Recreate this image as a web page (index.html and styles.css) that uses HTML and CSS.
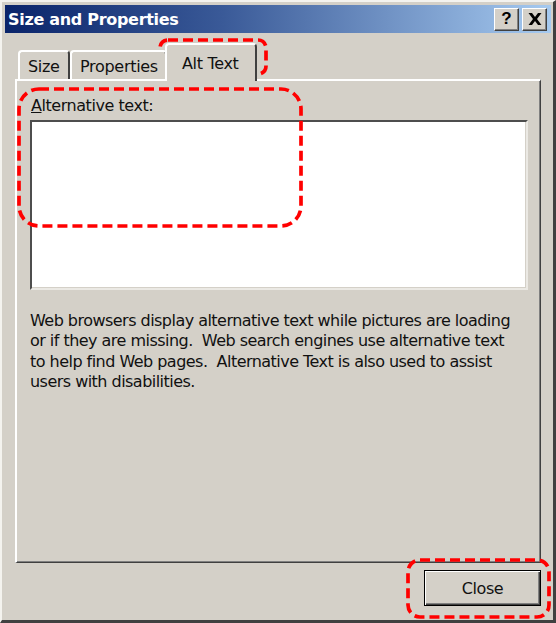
FILE: index.html
```html
<!DOCTYPE html>
<html>
<head>
<meta charset="utf-8">
<link rel="stylesheet" href="styles.css">
</head>
<body>
<div class="window">
  <div class="titlebar">
    <span class="title">Size and Properties</span>
    <div class="tbtns">
      <span class="tbtn help">?</span>
      <span class="tbtn close">
        <svg width="14" height="12" viewBox="0 0 14 12"><path d="M0.5 0h3.5l3 4 3-4h3.5L9 6l4.5 6H10L7 8l-3 4H0.5L5 6z" fill="#000"/></svg>
      </span>
    </div>
  </div>
  <div class="content">
    <div class="tabs">
      <div class="tab first">Size</div>
      <div class="tab">Properties</div>
      <div class="tab active">Alt Text</div>
    </div>
    <div class="panel">
      <div class="label"><u>A</u>lternative text:</div>
      <div class="textarea"></div>
      <p class="desc">Web browsers display alternative text while pictures are loading<br>or if they are missing.&nbsp; Web search engines use alternative text<br>to help find Web pages.&nbsp; Alternative Text is also used to assist<br>users with disabilities.</p>
    </div>
    <div class="footer">
      <button class="btn">Close</button>
    </div>
  </div>
  <svg class="marks" width="556" height="623" viewBox="0 0 556 623">
    <rect x="160" y="40" width="106" height="34" rx="8" />
    <rect x="19" y="89" width="282" height="137" rx="20" />
    <rect x="408" y="560" width="141" height="57" rx="12" />
  </svg>
</div>
</body>
</html>
```

FILE: styles.css
```css
html, body {
  margin: 0;
  padding: 0;
  background: #d4d0c8;
}
.window {
  position: relative;
  width: 556px;
  height: 623px;
  box-sizing: border-box;
  background: #d4d0c8;
  border-top: 2px solid #f4f3ef;
  border-left: 2px solid #f4f3ef;
  border-right: 3px solid #404040;
  border-bottom: 3px solid #404040;
  padding: 3px 2px 0 3px;
  font-family: "DejaVu Sans", sans-serif;
  color: #111;
  display: flex;
  flex-direction: column;
}
.titlebar {
  height: 28px;
  flex: none;
  background: linear-gradient(to right, #0a246a, #3a5a98 40%, #a6caf0);
  display: flex;
  align-items: center;
  justify-content: space-between;
  padding: 0 4px 0 3px;
}
.title {
  color: #fff;
  font-weight: bold;
  font-size: 16px;
  letter-spacing: -0.3px;
}
.tbtns {
  display: flex;
  gap: 3px;
}
.tbtn {
  width: 25px;
  height: 23px;
  box-sizing: border-box;
  background: #d4d0c8;
  border-top: 1px solid #fff;
  border-left: 1px solid #fff;
  border-right: 1px solid #404040;
  border-bottom: 1px solid #404040;
  box-shadow: inset -1px -1px 0 #808080;
  display: flex;
  align-items: center;
  justify-content: center;
  font-family: "Liberation Sans", sans-serif;
  font-weight: bold;
  font-size: 17px;
  color: #000;
}
.content {
  flex: 1;
  display: flex;
  flex-direction: column;
  padding: 10px 10px 0 10px;
}
.tabs {
  height: 38px;
  flex: none;
  display: flex;
  align-items: flex-end;
  padding-left: 3px;
  position: relative;
  z-index: 1;
  margin-bottom: -2px;
}
.tab {
  height: 29px;
  box-sizing: border-box;
  padding: 2px 7px 0 8px;
  border-top: 2px solid #fff;
  border-left: 2px solid #fff;
  border-right: 2px solid #404040;
  border-radius: 4px 4px 0 0;
  font-size: 16px;
  letter-spacing: -0.3px;
  display: flex;
  align-items: center;
  background: #d4d0c8;
  margin-bottom: 2px;
}
.tab.first {
  width: 52px;
}
.tab.active {
  height: 38px;
  margin-bottom: 0;
  margin-left: -2px;
  padding: 0 16px 0 15px;
  position: relative;
}
.panel {
  height: 484px;
  flex: none;
  box-sizing: border-box;
  border-top: 2px solid #fff;
  border-left: 2px solid #fff;
  border-right: 1px solid #404040;
  border-bottom: 1px solid #404040;
  box-shadow: inset -1px -1px 0 #808080;
  padding: 15px 12px 0 13px;
  display: flex;
  flex-direction: column;
}
.label {
  font-size: 16px;
  letter-spacing: -0.45px;
  padding-left: 1px;
  height: 24px;
  line-height: 20px;
}
.textarea {
  height: 170px;
  flex: none;
  box-sizing: border-box;
  background: #fff;
  border-top: 2px solid #4d4d4d;
  border-left: 2px solid #4d4d4d;
  border-right: 2px solid #ebe9e4;
  border-bottom: 2px solid #ebe9e4;
  box-shadow: inset -1px -1px 0 #d4d0c8;
}
.desc {
  margin: 21px 0 0 0;
  font-size: 16px;
  letter-spacing: -0.53px;
  line-height: 20.3px;
}
.footer {
  display: flex;
  justify-content: flex-end;
  padding-top: 7px;
}
.btn {
  width: 117px;
  height: 36px;
  box-sizing: border-box;
  background: #d4d0c8;
  border: 1px solid #000;
  box-shadow: inset 1px 1px 0 #fff, inset -1px -1px 0 #404040, inset -2px -2px 0 #808080;
  font-family: "DejaVu Sans", sans-serif;
  font-size: 16px;
  letter-spacing: -0.4px;
  color: #111;
  padding: 0;
}
.marks {
  position: absolute;
  left: -2px;
  top: -2px;
  pointer-events: none;
}
.marks rect {
  fill: none;
  stroke: #ff0000;
  stroke-width: 3.7;
  stroke-dasharray: 10 5;
}
```
